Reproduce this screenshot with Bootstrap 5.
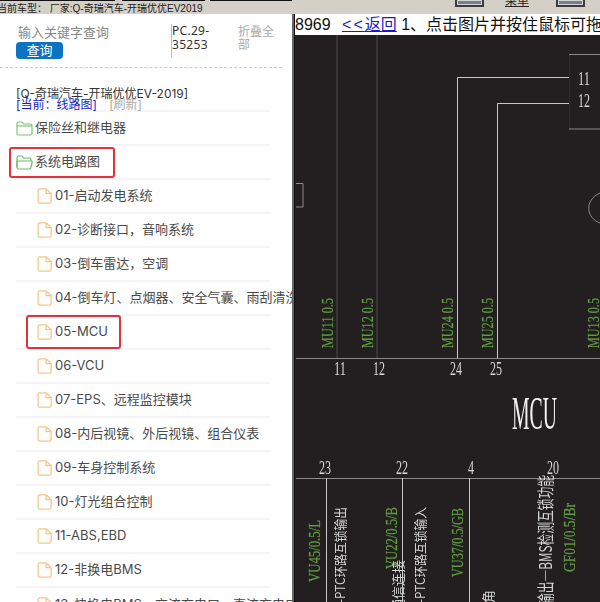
<!DOCTYPE html>
<html lang="zh-CN">
<head>
  <meta charset="UTF-8" />
  <meta name="viewport" content="width=device-width, initial-scale=1" />
  <title>线路图</title>
  <link href="https://cdn.jsdelivr.net/npm/bootstrap@5.3.2/dist/css/bootstrap.min.css" rel="stylesheet" />
  <style>
    html, body { height: 100%; overflow: hidden; }
    body { font-family: Inter, "Noto Sans CJK SC", sans-serif; font-size: 13px; color: #444; background: #fff; }

    /* top strip */
    .top-strip { height: 14px; background: #d4d0c8; overflow: hidden; flex: none; }
    .strip-left { width: 292px; flex: none; }
    .strip-bars { height: 1px; gap: 5px; }
    .strip-bars i { display: block; background: #111; height: 1px; }
    .strip-bars i:nth-child(1) { width: 116px; margin-right: 2px; }
    .strip-bars i:nth-child(2) { width: 83px; }
    .strip-bars i:nth-child(3) { width: 83px; }
    .strip-title { font-family: "Liberation Sans", "Noto Sans CJK SC", sans-serif; font-size: 10px; line-height: 12px; color: #222; margin: 2px 0 0 -3px; white-space: nowrap; }
    .tool-btn { width: 29px; height: 7px; background: #7d7d7d; border: 2px solid #3c3c3c; border-top: 0; flex: none; box-shadow: inset 0 0 0 1px #cfd6da; }
    .tool-label { font-size: 12px; line-height: 12px; margin: -5px 27px 0 21px; text-decoration: underline; color: #222; height: 14px; }
    .tool-first { margin-left: 163px; }

    /* left tree */
    .side { width: 292px; flex: none; position: relative; overflow: hidden; }
    .side-head { height: 54px; padding: 9px 0 0 16px; border-bottom: 1px dashed #ccc; width: 282px; }
    .search-col { width: 155px; flex: none; }
    .search-hint { color: #888; font-size: 13px; line-height: 18px; padding-left: 2px; }
    .btn-query { display: block; width: 47px; height: 17px; margin-top: 1px; padding: 0; background: #0b72c4; border: 0; border-radius: 4px; color: #fff; font-size: 13px; line-height: 17px; }
    .pc-col { width: 67px; flex: none; height: 34px; margin-top: 1px; border-left: 1px solid #bbb; font-family: "Noto Sans", sans-serif; font-size: 12px; line-height: 14px; color: #333; letter-spacing: .3px; }
    .fold-col { font-size: 12px; line-height: 13px; color: #aaa; width: 40px; margin-top: 2px; }
    .car-title { padding: 19px 0 0 16px; font-size: 12px; line-height: 13px; color: #333; height: 42px; white-space: nowrap; }
    .cur-line { line-height: 10px; }
    .cur-line a { color: #1a1acb; text-decoration: none; margin-right: 9px; }
    .cur-line span { color: #aaa; }

    .tree { width: 255px; margin-left: 16px; border-top: 2px solid #f5f5f5; overflow: visible; border-radius: 0; }
    .tree .list-group-item { height: 34px; padding: 0; border: 0; border-bottom: 2px solid #f5f5f5; background: transparent; color: #4a4a4a; font-size: 13px; white-space: nowrap; overflow: visible; display: flex; align-items: center; gap: 2px; }
    .tree .list-group-item svg { flex: none; }
    .tree .leaf { padding-left: 21px; gap: 3px; }
    .note-box { position: absolute; border: 2px solid #e2323b; border-radius: 3px; }
    .note-a { left: 9px; top: 133px; width: 106px; height: 31px; }
    .note-b { left: 26px; top: 301px; width: 95px; height: 34px; }

    .splitter { width: 3px; flex: none; background: #666; border-right: 1px solid #111; }

    /* right drawing */
    .viewer { min-width: 0; }
    .viewer-bar { height: 21px; flex: none; font-size: 16px; line-height: 21px; color: #111; white-space: nowrap; overflow: hidden; background: #fff; font-family: "Liberation Sans", "Noto Sans CJK SC", sans-serif; }
    .viewer-bar a { color: #1a1acb; margin-left: 7px; }
    .viewer-bar a b { font-weight: 400; letter-spacing: 2px; }
    .drawing { flex: 1; background: #231f20; overflow: hidden; }
    .drawing svg { display: block; will-change: transform; }
    .wire { stroke: #c9c9c9; stroke-width: 1; fill: none; }
    .wire-dim { stroke: #3f3d3e; stroke-width: 1.5; fill: none; }
    .wire-faint { stroke: #2e2b2c; stroke-width: 1; fill: none; }
    .wire-mid { stroke: #8a8a8a; stroke-width: 1; fill: none; }
    .lbl { font-family: "Liberation Serif", serif; fill: #d9d9d9; }
    .lbl-green { font-family: "Liberation Serif", serif; fill: #5f9c40; font-size: 17px; stroke: #5f9c40; stroke-width: .25px; }
    .lbl-cjk { font-family: "Noto Sans CJK SC", sans-serif; fill: #d4d4d4; font-size: 13px; }
  </style>
</head>
<body class="d-flex flex-column">

<div class="top-strip d-flex">
  <div class="strip-left">
    <div class="strip-bars d-flex"><i></i><i></i><i></i></div>
    <div class="strip-title">当前车型： 厂家:Q-奇瑞汽车-开瑞优优EV2019</div>
  </div>
  <div class="tool-btn tool-first"></div>
  <div class="tool-label">菜单</div>
  <div class="tool-btn"></div>
</div>

<div class="d-flex flex-grow-1 overflow-hidden">
  <aside class="side">
    <div class="side-head d-flex">
      <div class="search-col">
        <div class="search-hint">输入关键字查询</div>
        <button type="button" class="btn btn-query">查询</button>
      </div>
      <div class="pc-col">PC.29-<br />35253</div>
      <div class="fold-col">折叠全部</div>
    </div>
    <div class="car-title">
      <div>[Q-奇瑞汽车-开瑞优优EV-2019]</div>
      <div class="cur-line"><a href="#">[当前：线路图]</a> <span>[刷新]</span></div>
    </div>

    <ul class="list-group list-group-flush tree" id="tree"></ul>

    <div class="note-box note-a"></div>
    <div class="note-box note-b"></div>
  </aside>

  <div class="splitter"></div>

  <section class="viewer flex-grow-1 d-flex flex-column">
    <div class="viewer-bar">8969 <a href="#"><b>&lt;&lt;</b>返回</a> 1、点击图片并按住鼠标可拖动图片</div>
    <div class="drawing">
      <svg width="305" height="567" viewBox="295 35 305 567" xmlns="http://www.w3.org/2000/svg">
        <!-- upper wires -->
        <path class="wire-dim" d="M337 35V358M377 35V358" />
        <path class="wire-faint" d="M569.500 54V129" />
        <path class="wire" d="M457.500 358V77.500H569M497.500 358V103.500H569" />
        <path class="wire-mid" d="M569 54.500H600M569 129H600M296 358.500H600M296 478.500H600M296 183.500H303V207H296" />
        <path class="wire-mid" d="M600 193C584 200 586 218 600 223" />
        <path class="wire" d="M326.500 478V602M402.500 478V602M469.500 478V602" />

        <text class="lbl" x="578" y="85" font-size="18" textLength="12" lengthAdjust="spacingAndGlyphs">11</text>
        <text class="lbl" x="578" y="107" font-size="18" textLength="12" lengthAdjust="spacingAndGlyphs">12</text>

        <text class="lbl-green" transform="translate(333 348) rotate(-90)" textLength="50" lengthAdjust="spacingAndGlyphs">MU11 0.5</text>
        <text class="lbl-green" transform="translate(373 348) rotate(-90)" textLength="50" lengthAdjust="spacingAndGlyphs">MU12 0.5</text>
        <text class="lbl-green" transform="translate(453 348) rotate(-90)" textLength="50" lengthAdjust="spacingAndGlyphs">MU24 0.5</text>
        <text class="lbl-green" transform="translate(493 348) rotate(-90)" textLength="50" lengthAdjust="spacingAndGlyphs">MU25 0.5</text>
        <text class="lbl-green" transform="translate(599 348) rotate(-90)" textLength="50" lengthAdjust="spacingAndGlyphs">MU13 0.5</text>

        <text class="lbl" x="334" y="375" font-size="18" textLength="12" lengthAdjust="spacingAndGlyphs">11</text>
        <text class="lbl" x="373" y="375" font-size="18" textLength="12" lengthAdjust="spacingAndGlyphs">12</text>
        <text class="lbl" x="450" y="375" font-size="18" textLength="12" lengthAdjust="spacingAndGlyphs">24</text>
        <text class="lbl" x="490" y="375" font-size="18" textLength="12" lengthAdjust="spacingAndGlyphs">25</text>

        <text class="lbl" x="512" y="429" font-size="46" textLength="45" lengthAdjust="spacingAndGlyphs" style="fill:#f2f2f2">MCU</text>

        <text class="lbl" x="319" y="474" font-size="18" textLength="12" lengthAdjust="spacingAndGlyphs">23</text>
        <text class="lbl" x="396" y="474" font-size="18" textLength="12" lengthAdjust="spacingAndGlyphs">22</text>
        <text class="lbl" x="468" y="474" font-size="18" textLength="6" lengthAdjust="spacingAndGlyphs">4</text>
        <text class="lbl" x="547" y="474" font-size="18" textLength="12" lengthAdjust="spacingAndGlyphs">20</text>

        <text class="lbl-green" transform="translate(320 582) rotate(-90)" textLength="62" lengthAdjust="spacingAndGlyphs">VU45/0.5/L</text>
        <text class="lbl-cjk" transform="translate(345 603) rotate(-90)" textLength="96" lengthAdjust="spacingAndGlyphs">-PTC环路互锁输出</text>
        <text class="lbl-green" transform="translate(397 569) rotate(-90)" textLength="62" lengthAdjust="spacingAndGlyphs">VU22/0.5/B</text>
        <text class="lbl-cjk" transform="translate(403 560) rotate(-90)" text-anchor="end">通信连接</text>
        <text class="lbl-cjk" transform="translate(425 603) rotate(-90)" textLength="96" lengthAdjust="spacingAndGlyphs">-PTC环路互锁输入</text>
        <text class="lbl-green" transform="translate(463 577) rotate(-90)" textLength="69" lengthAdjust="spacingAndGlyphs">VU37/0.5/GB</text>
        <text class="lbl-cjk" transform="translate(493 590) rotate(-90)" text-anchor="end">视角</text>
        <text class="lbl-cjk" transform="translate(552 605) rotate(-90)" textLength="130" lengthAdjust="spacingAndGlyphs" style="font-size:17px">输出—BMS检测互锁功能</text>
        <text class="lbl-green" transform="translate(575 572) rotate(-90)" textLength="69" lengthAdjust="spacingAndGlyphs">GF01/0.5/Br</text>
      </svg>
    </div>
  </section>
</div>

<script src="https://cdn.jsdelivr.net/npm/bootstrap@5.3.2/dist/js/bootstrap.bundle.min.js"></script>
<script>
  const folderClosed = `<svg width="17" height="15" viewBox="0 0 17 15" fill="none" stroke="#7cc576" stroke-width="1.2"><path d="M1 2.500Q1 1 2.500 1H6L7.500 3H14.500Q16 3 16 4.500V12.500Q16 14 14.500 14H2.500Q1 14 1 12.500Z"/><path d="M1 5H16"/></svg>`;
  const folderOpen = `<svg width="17" height="15" viewBox="0 0 17 15" fill="none" stroke="#6cbb66" stroke-width="1.2"><path d="M1 12.500V2.500Q1 1 2.500 1H6L7.500 3H13.500Q15 3 15 4.500V6"/><path d="M1 6H15.500Q16.500 6 16.200 7L14.800 12.800Q14.500 14 13.300 14H2.500Q1 14 1 12.500Z"/></svg>`;
  const doc = `<svg width="15" height="16" viewBox="0 0 14 15" fill="none" stroke="#f5c68c" stroke-width="1.2"><path d="M2.500 .8H8.500L13.200 5.200V12.700Q13.200 14.200 11.700 14.200H2.500Q1 14.200 1 12.700V2.300Q1 .8 2.500 .8Z"/><path d="M8.500 .8V5.200H13.200"/></svg>`;

  const leaves = ["01-启动发电系统", "02-诊断接口，音响系统", "03-倒车雷达，空调",
    "04-倒车灯、点烟器、安全气囊、雨刮清洗系统", "05-MCU", "06-VCU", "07-EPS、远程监控模块",
    "08-内后视镜、外后视镜、组合仪表", "09-车身控制系统", "10-灯光组合控制", "11-ABS,EBD",
    "12-非换电BMS", "13-快换电BMS、交流充电口、直流充电口"];

  let rows = `<li class="list-group-item">${folderClosed}<span>保险丝和继电器</span></li>`;
  rows += `<li class="list-group-item">${folderOpen}<span>系统电路图</span></li>`;
  leaves.forEach(name => {
    rows += `<li class="list-group-item leaf">${doc}<span>${name}</span></li>`;
  });
  document.getElementById("tree").innerHTML = rows;
</script>
</body>
</html>
